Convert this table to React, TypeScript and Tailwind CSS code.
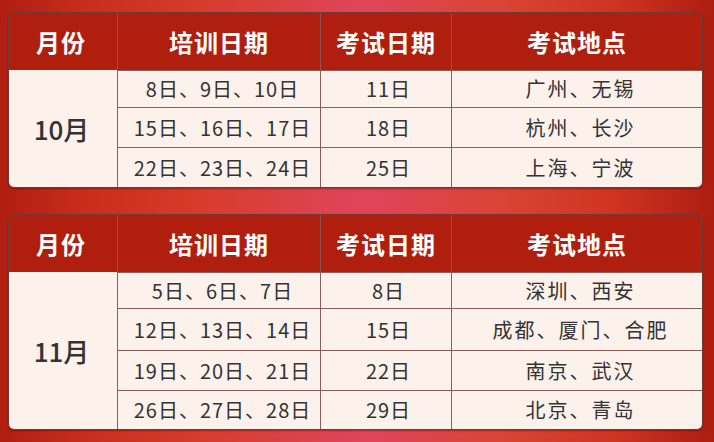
import React from "react";

type Row = { train: string; exam: string; place: string; h: string };

const t1: Row[] = [
  { train: "8日、9日、10日", exam: "11日", place: "广州、无锡", h: "h-[37px]" },
  { train: "15日、16日、17日", exam: "18日", place: "杭州、长沙", h: "h-[40px]" },
  { train: "22日、23日、24日", exam: "25日", place: "上海、宁波", h: "h-[40px]" },
];

const t2: Row[] = [
  { train: "5日、6日、7日", exam: "8日", place: "深圳、西安", h: "h-[36px]" },
  { train: "12日、13日、14日", exam: "15日", place: "成都、厦门、合肥", h: "h-[42px]" },
  { train: "19日、20日、21日", exam: "22日", place: "南京、武汉", h: "h-[40px]" },
  { train: "26日、27日、28日", exam: "29日", place: "北京、青岛", h: "h-[39px]" },
];

function Table({ month, rows }: { month: string; rows: Row[] }) {
  return (
    <div className="rounded-[6px] border border-[#6e3b36] overflow-hidden shadow-[0_1px_2px_rgba(60,0,0,0.4)]">
      <div className="grid grid-cols-[108px_203px_131px_1fr] h-[57px] bg-[#b01f0e] text-white text-[24px] font-bold tracking-[1px]">
        <div className="flex items-center justify-center pr-[4px]">月份</div>
        <div className="flex items-center justify-center border-l border-[#8d5350]">培训日期</div>
        <div className="flex items-center justify-center border-l border-[#8d5350]">考试日期</div>
        <div className="flex items-center justify-center border-l border-[#8d5350]">考试地点</div>
      </div>
      <div className="grid grid-cols-[108px_1fr] bg-[#fdf1ec] text-[#333333]">
        <div className="flex items-center justify-center text-[26px] font-medium pr-[3px]">{month}</div>
        <div className="flex flex-col">
          {rows.map((r, i) => (
            <div
              key={i}
              className={`grid grid-cols-[203px_131px_1fr] border-t border-[#8d5b5a] ${r.h} text-[20px] tracking-[1px]`}
            >
              <div className="flex items-center justify-center border-l border-[#8d5b5a] pl-[7px]">{r.train}</div>
              <div className="flex items-center justify-center border-l border-[#8d5b5a] pl-[5px]">{r.exam}</div>
              <div className="flex items-center justify-center border-l border-[#8d5b5a] tracking-[2px] pl-[7px]">{r.place}</div>
            </div>
          ))}
        </div>
      </div>
    </div>
  );
}

export default function App() {
  return (
    <div
      className="w-[714px] h-[442px] pl-[8px] pr-[11px] pt-[12px] flex flex-col gap-[26px] bg-[linear-gradient(to_right,#b01e0f_0%,#c92d1c_12%,#d73c2b_28%,#df4456_48%,#e0445a_52%,#da4434_70%,#cf3421_86%,#ad1d10_100%)]"
      style={{ fontFamily: '"Noto Sans CJK SC", "Noto Sans", sans-serif' }}
    >
      <Table month="10月" rows={t1} />
      <Table month="11月" rows={t2} />
    </div>
  );
}
